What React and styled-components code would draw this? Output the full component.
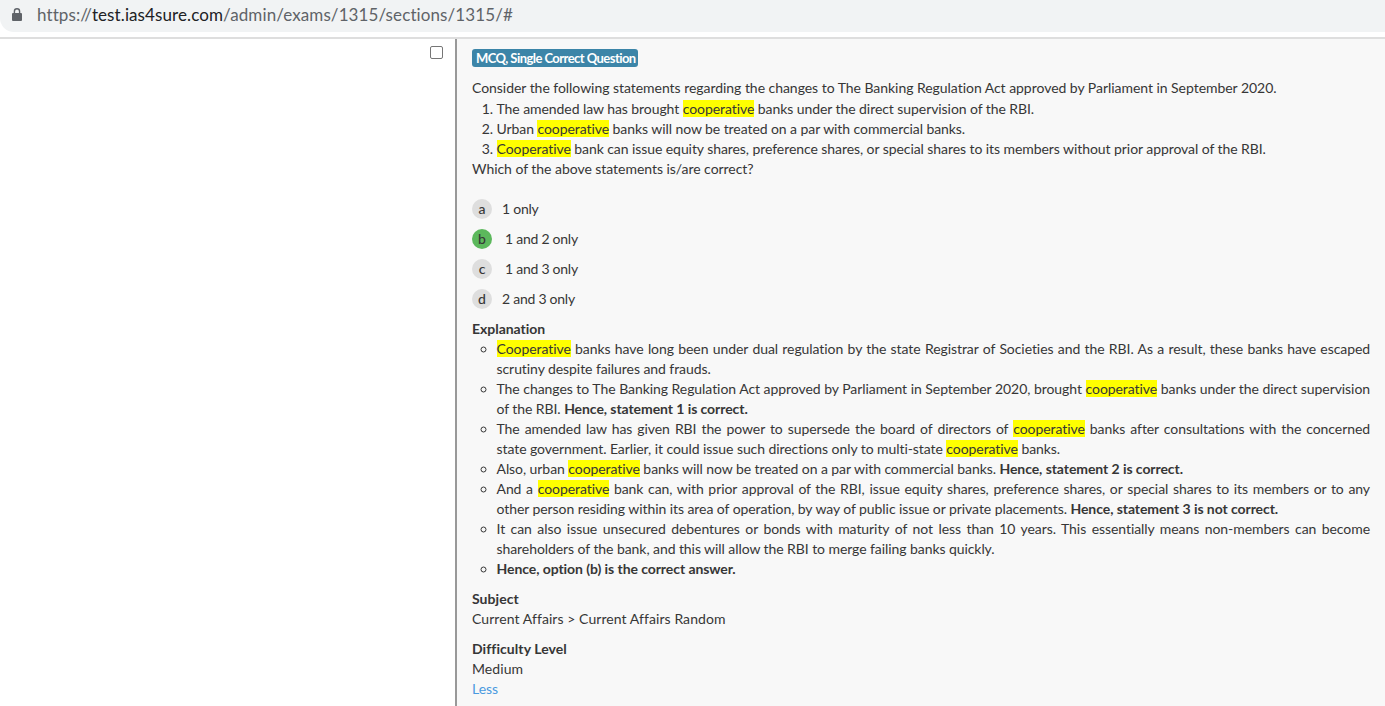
import React from 'react';
import styled, { createGlobalStyle } from 'styled-components';

const GlobalStyle = createGlobalStyle`
  html, body {
    margin: 0;
    padding: 0;
    background: #fff;
    height: 706px;
    overflow: hidden;
  }
  body {
    font-family: 'Lato', 'Liberation Sans', sans-serif;
    font-size: 14px;
    line-height: 20px;
    color: #363636;
    letter-spacing: -0.04px;
  }
`;

const AddressBar = styled.div`
  height: 32px;
  background: #f1f3f4;
  border-radius: 0 0 0 14px;
  display: flex;
  align-items: center;
  padding: 0 0 3px 12px;
  box-sizing: border-box;
  gap: 15px;
`;

const Url = styled.div`
  font-size: 17px;
  color: #5f6368;
  letter-spacing: 0.1px;
  b { font-weight: 400; color: #202124; }
`;

const Rule = styled.div`
  height: 2px;
  margin-top: 5px;
  background: #dedede;
`;

const Row = styled.div`
  display: flex;
  height: 667px;
`;

const LeftColumn = styled.div`
  width: 455px;
  flex: none;
  display: flex;
  justify-content: flex-end;
  padding: 7px 12px 0 0;
  box-sizing: border-box;
`;

const CheckBox = styled.div`
  width: 13px;
  height: 13px;
  box-sizing: border-box;
  border: 1px solid #767676;
  border-radius: 2px;
  background: #fff;
`;

const Panel = styled.div`
  flex: 1;
  background: #f8f8f8;
  border-left: 2px solid #999;
  padding: 10px 15px 0;
`;

const Badge = styled.div`
  display: inline-block;
  background: #3c85a8;
  color: #fff;
  font-size: 13px;
  font-weight: 700;
  line-height: 18px;
  padding: 0 2px 0 4px;
  border-radius: 3px;
  letter-spacing: -0.55px;
  vertical-align: top;
`;

const BadgeRow = styled.div`
  height: 18px;
  margin-bottom: 11px;
`;

const Intro = styled.div`
  margin-bottom: 1px;
`;

const Statements = styled.ol`
  margin: 0;
  padding-left: 24.5px;
  letter-spacing: -0.07px;
`;

const Mark = styled.span`
  background: #ffff00;
`;

const Options = styled.div`
  margin-top: 15px;
  margin-bottom: 5px;
`;

const Option = styled.div`
  display: flex;
  align-items: center;
  height: 30px;
  letter-spacing: -0.25px;
`;

const Letter = styled.span`
  width: 20px;
  height: 20px;
  border-radius: 50%;
  background: ${p => (p.$correct ? '#5cb85c' : '#dedede')};
  font-size: 14px;
  font-weight: 500;
  letter-spacing: 0;
  display: flex;
  align-items: center;
  justify-content: center;
  margin-right: ${p => p.$gap}px;
`;

const Heading = styled.div`
  font-weight: 700;
`;

const Explanation = styled.ul`
  list-style: circle;
  margin: 0 0 10px;
  padding-left: 24.5px;
  letter-spacing: -0.07px;
  li { text-align: justify; }
`;

const Block = styled.div`
  margin-bottom: 10px;
  letter-spacing: 0.07px;
`;

const LessLink = styled.a`
  color: #4a9ae0;
  display: block;
  margin-top: -10px;
`;

function LockIcon() {
  return (
    <svg width="10" height="13" viewBox="0 0 10 13">
      <path d="M2.4 6V3.4a2.6 2.6 0 0 1 5.2 0V6" fill="none" stroke="#5f6368" strokeWidth="1.4" />
      <rect x="0" y="5" width="10" height="8" rx="1" fill="#5f6368" />
    </svg>
  );
}

const options = [
  { letter: 'a', label: '1 only', gap: 10 },
  { letter: 'b', label: '1 and 2 only', gap: 13, correct: true },
  { letter: 'c', label: '1 and 3 only', gap: 13 },
  { letter: 'd', label: '2 and 3 only', gap: 10 },
];

export default function App() {
  return (
    <>
      <GlobalStyle />
      <AddressBar>
        <LockIcon />
        <Url>https://<b>test.ias4sure.com</b>/admin/exams/1315/sections/1315/#</Url>
      </AddressBar>
      <Rule />
      <Row>
        <LeftColumn>
          <CheckBox />
        </LeftColumn>
        <Panel>
          <BadgeRow>
            <Badge>MCQ, Single Correct Question</Badge>
          </BadgeRow>
          <Intro>Consider the following statements regarding the changes to The Banking Regulation Act approved by Parliament in September 2020.</Intro>
          <Statements>
            <li>The amended law has brought <Mark>cooperative</Mark> banks under the direct supervision of the RBI.</li>
            <li>Urban <Mark>cooperative</Mark> banks will now be treated on a par with commercial banks.</li>
            <li><Mark>Cooperative</Mark> bank can issue equity shares, preference shares, or special shares to its members without prior approval of the RBI.</li>
          </Statements>
          <div>Which of the above statements is/are correct?</div>
          <Options>
            {options.map(o => (
              <Option key={o.letter}>
                <Letter $correct={o.correct} $gap={o.gap}>{o.letter}</Letter>
                {o.label}
              </Option>
            ))}
          </Options>
          <Heading>Explanation</Heading>
          <Explanation>
            <li><Mark>Cooperative</Mark> banks have long been under dual regulation by the state Registrar of Societies and the RBI. As a result, these banks have escaped scrutiny despite failures and frauds.</li>
            <li>The changes to The Banking Regulation Act approved by Parliament in September 2020, brought <Mark>cooperative</Mark> banks under the direct supervision of the RBI. <b>Hence, statement 1 is correct.</b></li>
            <li>The amended law has given RBI the power to supersede the board of directors of <Mark>cooperative</Mark> banks after consultations with the concerned state government. Earlier, it could issue such directions only to multi-state <Mark>cooperative</Mark> banks.</li>
            <li>Also, urban <Mark>cooperative</Mark> banks will now be treated on a par with commercial banks. <b>Hence, statement 2 is correct.</b></li>
            <li>And a <Mark>cooperative</Mark> bank can, with prior approval of the RBI, issue equity shares, preference shares, or special shares to its members or to any other person residing within its area of operation, by way of public issue or private placements. <b>Hence, statement 3 is not correct.</b></li>
            <li>It can also issue unsecured debentures or bonds with maturity of not less than 10 years. This essentially means non-members can become shareholders of the bank, and this will allow the RBI to merge failing banks quickly.</li>
            <li><b>Hence, option (b) is the correct answer.</b></li>
          </Explanation>
          <Block>
            <Heading>Subject</Heading>
            <div>Current Affairs &gt; Current Affairs Random</div>
          </Block>
          <Block>
            <Heading>Difficulty Level</Heading>
            <div>Medium</div>
          </Block>
          <LessLink>Less</LessLink>
        </Panel>
      </Row>
    </>
  );
}
